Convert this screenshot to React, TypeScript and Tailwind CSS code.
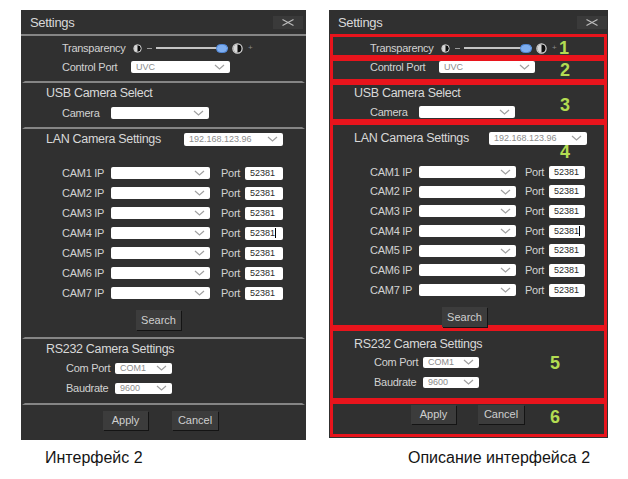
import type { ReactNode } from "react";

const FONT = "font-['Liberation_Sans',Arial,sans-serif]";

function Chevron() {
  return (
    <svg width="11" height="6" viewBox="0 0 11 6" className="shrink-0">
      <polyline points="1,1 5.5,5 10,1" fill="none" stroke="#a0a0a0" strokeWidth="1.2" />
    </svg>
  );
}

function Select({ value, className }: { value?: string; className: string }) {
  return (
    <div
      className={`flex shrink-0 items-center justify-between rounded-[2px] bg-white pl-[5px] pr-[5px] ${className}`}
    >
      <span className="text-[9px] leading-none text-[#8c8c8c]">{value}</span>
      <Chevron />
    </div>
  );
}

function Contrast({ size }: { size: number }) {
  return (
    <svg width={size} height={size} viewBox="0 0 10 10" className="shrink-0">
      <circle cx="5" cy="5" r="4.2" fill="#0d0d0d" stroke="#d8d8d8" strokeWidth="1.1" />
      <path d="M5 1.2 A3.8 3.8 0 0 0 5 8.8 Z" fill="#d8d8d8" />
    </svg>
  );
}

function Btn({ label, className }: { label: string; className: string }) {
  return (
    <button
      type="button"
      className={`flex shrink-0 items-center justify-center bg-[#3c3c3c] text-[11px] leading-none text-[#cfcfcf] shadow-[1px_1px_0_#141414] ${className}`}
    >
      {label}
    </button>
  );
}

function Mark({ n, className }: { n: string; className: string }) {
  return (
    <span className={`absolute text-[18px] font-bold leading-none text-[#b3dc52] ${className}`}>
      {n}
    </span>
  );
}

function CamRow({ n, marked }: { n: number; marked: boolean }) {
  return (
    <div className="flex h-[14px] shrink-0 items-center pl-[37px]">
      <span className="w-[49px] shrink-0 text-[11px] leading-none tracking-tight">CAM{n} IP</span>
      <Select className={marked ? "h-[12px] w-[97px]" : "h-[12px] w-[99px]"} />
      <span
        className={`w-[24px] shrink-0 text-[11px] leading-none tracking-tight ${marked ? "ml-[9px]" : "ml-[11px]"}`}
      >
        Port
      </span>
      <div
        className={`flex h-[13px] shrink-0 items-center rounded-[2px] bg-white pl-[5px] ${marked ? "w-[36px]" : "w-[38px]"}`}
      >
        <span className="text-[9px] leading-none text-[#2a2a2a]">52381</span>
        {n === 4 && <span className="h-[10px] w-px bg-black" />}
      </div>
    </div>
  );
}

function SettingsPanel({ marked = false }: { marked?: boolean }) {
  const box = marked
    ? "relative mx-[1px] shrink-0 border-[3px] border-[#e8141c]"
    : "mx-[1px] shrink-0 border-x-[3px] border-b-2 border-x-transparent border-b-[#858585]";

  const transparency = (
    <div className="flex h-[14px] shrink-0 items-center pl-[37px]">
      <span className="w-[71px] shrink-0 text-[11px] leading-none tracking-tight">Transparency</span>
      <Contrast size={9} />
      <span className="ml-[5px] h-px w-[5px] shrink-0 bg-[#9a9a9a]" />
      <span
        className={`relative ml-[4px] flex h-[10px] shrink-0 items-center ${marked ? "w-[68px]" : "w-[72px]"}`}
      >
        <span className="h-[2px] w-full bg-[#c4c4c4]" />
        <span className="absolute right-0 h-[9px] w-[12px] rounded-full border border-[#4f86d6] bg-[#7eaef0]" />
      </span>
      <span className="ml-[4px] flex">
        <Contrast size={11} />
      </span>
      <span className="ml-[5px] text-[8px] leading-none text-[#8a8a8a]">+</span>
    </div>
  );

  const control = (
    <div className="flex h-[12px] shrink-0 items-center pl-[37px]">
      <span className="w-[69px] shrink-0 text-[11px] leading-none tracking-tight">Control Port</span>
      <Select value="UVC" className={marked ? "h-[12px] w-[96px]" : "h-[12px] w-[99px]"} />
    </div>
  );

  const title = (text: string) => (
    <div className="flex h-[14px] shrink-0 items-center pl-[21px] text-[12.5px] leading-none tracking-tight text-[#d8d8d8]">
      {text}
    </div>
  );

  const comRow = (label: string, value: string, extra: string) => (
    <div className={`flex h-[12px] shrink-0 items-center pl-[41px] ${extra}`}>
      <span className="w-[49px] shrink-0 text-[11px] leading-none tracking-tight">{label}</span>
      <Select value={value} className={marked ? "h-[11px] w-[56px]" : "h-[11px] w-[57px]"} />
    </div>
  );

  let top: ReactNode;
  if (marked) {
    top = (
      <>
        <div className={`${box} h-[24px] pt-[1px]`}>
          <div className="pt-[3px]">{transparency}</div>
          <Mark n="1" className="right-[35px] top-[2px]" />
        </div>
        <div className={`${box} h-[24px]`}>
          {control}
          <Mark n="2" className="right-[34px] top-0" />
        </div>
      </>
    );
  } else {
    top = (
      <div className={`${box} flex h-[47px] flex-col gap-[6px] pt-[5px]`}>
        {transparency}
        {control}
      </div>
    );
  }

  return (
    <div
      className={`flex flex-col self-start bg-[#303030] text-[#d2d2d2] ${marked ? "h-[428px]" : "h-[430px]"}`}
    >
      <div
        className={`flex shrink-0 items-center justify-between pl-[9px] ${marked ? "h-[24px] pr-[1px]" : "h-[26px] border-b-2 border-b-[#858585] pr-[3px]"}`}
      >
        <span className="text-[13px] leading-none tracking-tight text-[#d8d8d8]">Settings</span>
        <button type="button" className="flex h-[13px] w-[30px] items-center justify-center bg-[#3a3a3a]">
          <svg width="12" height="7" viewBox="0 0 12 7">
            <path d="M0.5 0.5 L11.5 6.5 M0.5 6.5 L11.5 0.5" stroke="#bdbdbd" strokeWidth="1.1" />
          </svg>
        </button>
      </div>

      {top}

      <div className={`${box} flex flex-col ${marked ? "h-[40px] pt-[1px]" : "h-[46px] pt-[3px]"}`}>
        {title("USB Camera Select")}
        <div className={`flex h-[12px] shrink-0 items-center pl-[37px] ${marked ? "mt-[6px]" : "mt-[7px]"}`}>
          <span className="w-[49px] shrink-0 text-[11px] leading-none tracking-tight">Camera</span>
          <Select className={marked ? "h-[12px] w-[96px]" : "h-[12px] w-[98px]"} />
        </div>
        {marked && <Mark n="3" className="right-[34px] top-[11px]" />}
      </div>

      <div className={`${box} flex flex-col ${marked ? "h-[206px] pt-[6px]" : "h-[210px] pt-[3px]"}`}>
        <div className="flex h-[14px] shrink-0 items-center pl-[21px]">
          <span
            className={`shrink-0 text-[12.5px] leading-none tracking-tight text-[#d8d8d8] ${marked ? "w-[135px]" : "w-[138px]"}`}
          >
            LAN Camera Settings
          </span>
          <Select value="192.168.123.96" className={marked ? "h-[13px] w-[98px]" : "h-[13px] w-[99px]"} />
        </div>
        <div className={`mt-[20px] flex flex-col ${marked ? "gap-[5.7px]" : "gap-[6px]"}`}>
          {[1, 2, 3, 4, 5, 6, 7].map((n) => (
            <CamRow key={n} n={n} marked={marked} />
          ))}
        </div>
        <div className={`mt-[10px] flex ${marked ? "pl-[109px]" : "pl-[111px]"}`}>
          <Btn label="Search" className="h-[20px] w-[45px]" />
        </div>
        {marked && <Mark n="4" className="right-[34px] top-[18px]" />}
      </div>

      <div className={`${box} flex flex-col ${marked ? "h-[73px] pt-[6px]" : "h-[66px] pt-[3px]"}`}>
        {title("RS232 Camera Settings")}
        {comRow("Com Port", "COM1", marked ? "mt-[5px]" : "mt-[6px]")}
        {comRow("Baudrate", "9600", "mt-[8px]")}
        {marked && <Mark n="5" className="right-[44px] top-[23px]" />}
      </div>

      <div
        className={
          marked
            ? "relative mx-[1px] flex h-[36px] shrink-0 border-[3px] border-[#e8141c] pl-[78px] pt-[1px]"
            : "mx-[1px] flex h-[35px] shrink-0 border-x-[3px] border-x-transparent pl-[78px] pt-[6px]"
        }
      >
        <Btn label="Apply" className="h-[19px] w-[45px]" />
        <Btn label="Cancel" className={`h-[19px] w-[46px] ${marked ? "ml-[22px]" : "ml-[24px]"}`} />
        {marked && <Mark n="6" className="right-[44px] top-[4px]" />}
      </div>
    </div>
  );
}

export default function App() {
  return (
    <div className={`h-[479px] w-[628px] bg-white ${FONT}`}>
      <div className="grid grid-cols-[285px_279px] items-start gap-x-[23px] pl-[21px] pt-[10px]">
        <SettingsPanel />
        <SettingsPanel marked />
        <p className="mt-[9px] pl-[24px] text-[16px] leading-[18px] text-[#141414]">Интерфейс 2</p>
        <p className="mt-[9px] pl-[79px] text-[16px] leading-[18px] text-[#141414]">
          Описание интерфейса 2
        </p>
      </div>
    </div>
  );
}
